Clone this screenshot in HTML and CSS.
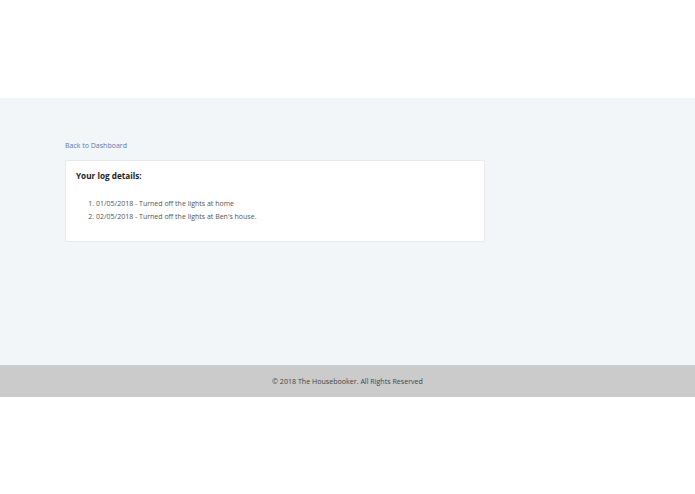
FILE: index.html
```html
<!DOCTYPE html>
<html>
<head>
<meta charset="utf-8">
<link rel="stylesheet" href="styles.css">
</head>
<body>
<header class="top"></header>
<main class="main">
  <div class="container">
    <a class="back" href="#">Back to Dashboard</a>
    <div class="card">
      <h2 class="title">Your log details:</h2>
      <ol class="log">
        <li>01/05/2018 - Turned off the lights at home</li>
        <li>02/05/2018 - Turned off the lights at Ben's house.</li>
      </ol>
    </div>
  </div>
</main>
<footer class="footer">© 2018 The Housebooker. All Rights Reserved</footer>
</body>
</html>
```
FILE: styles.css
```css
html, body {
  margin: 0;
  padding: 0;
  background: #ffffff;
  font-family: "Open Sans", "Liberation Sans", sans-serif;
}
.top {
  height: 98px;
  background: #ffffff;
}
.main {
  height: 267px;
  background: #f3f6f9;
  box-sizing: border-box;
  padding-top: 41px;
}
.container {
  margin-left: 65px;
  width: 420px;
}
.back {
  display: block;
  font-size: 7px;
  line-height: 14px;
  color: #5a77b0;
  text-decoration: none;
}
.card {
  margin-top: 7px;
  background: #ffffff;
  border: 1px solid #e6e9ee;
  border-radius: 2px;
  height: 82px;
  box-sizing: border-box;
  padding: 8px 10px;
}
.title {
  margin: 0;
  font-size: 8.2px;
  line-height: 14px;
  font-weight: 700;
  color: #222;
}
.log {
  margin: 14px 0 0 0;
  padding-left: 20px;
  font-size: 7px;
  line-height: 13px;
  color: #555;
}
.footer {
  height: 32px;
  background: #cbcbcb;
  display: flex;
  align-items: center;
  justify-content: center;
  font-size: 7.1px;
  color: #444;
}
```
